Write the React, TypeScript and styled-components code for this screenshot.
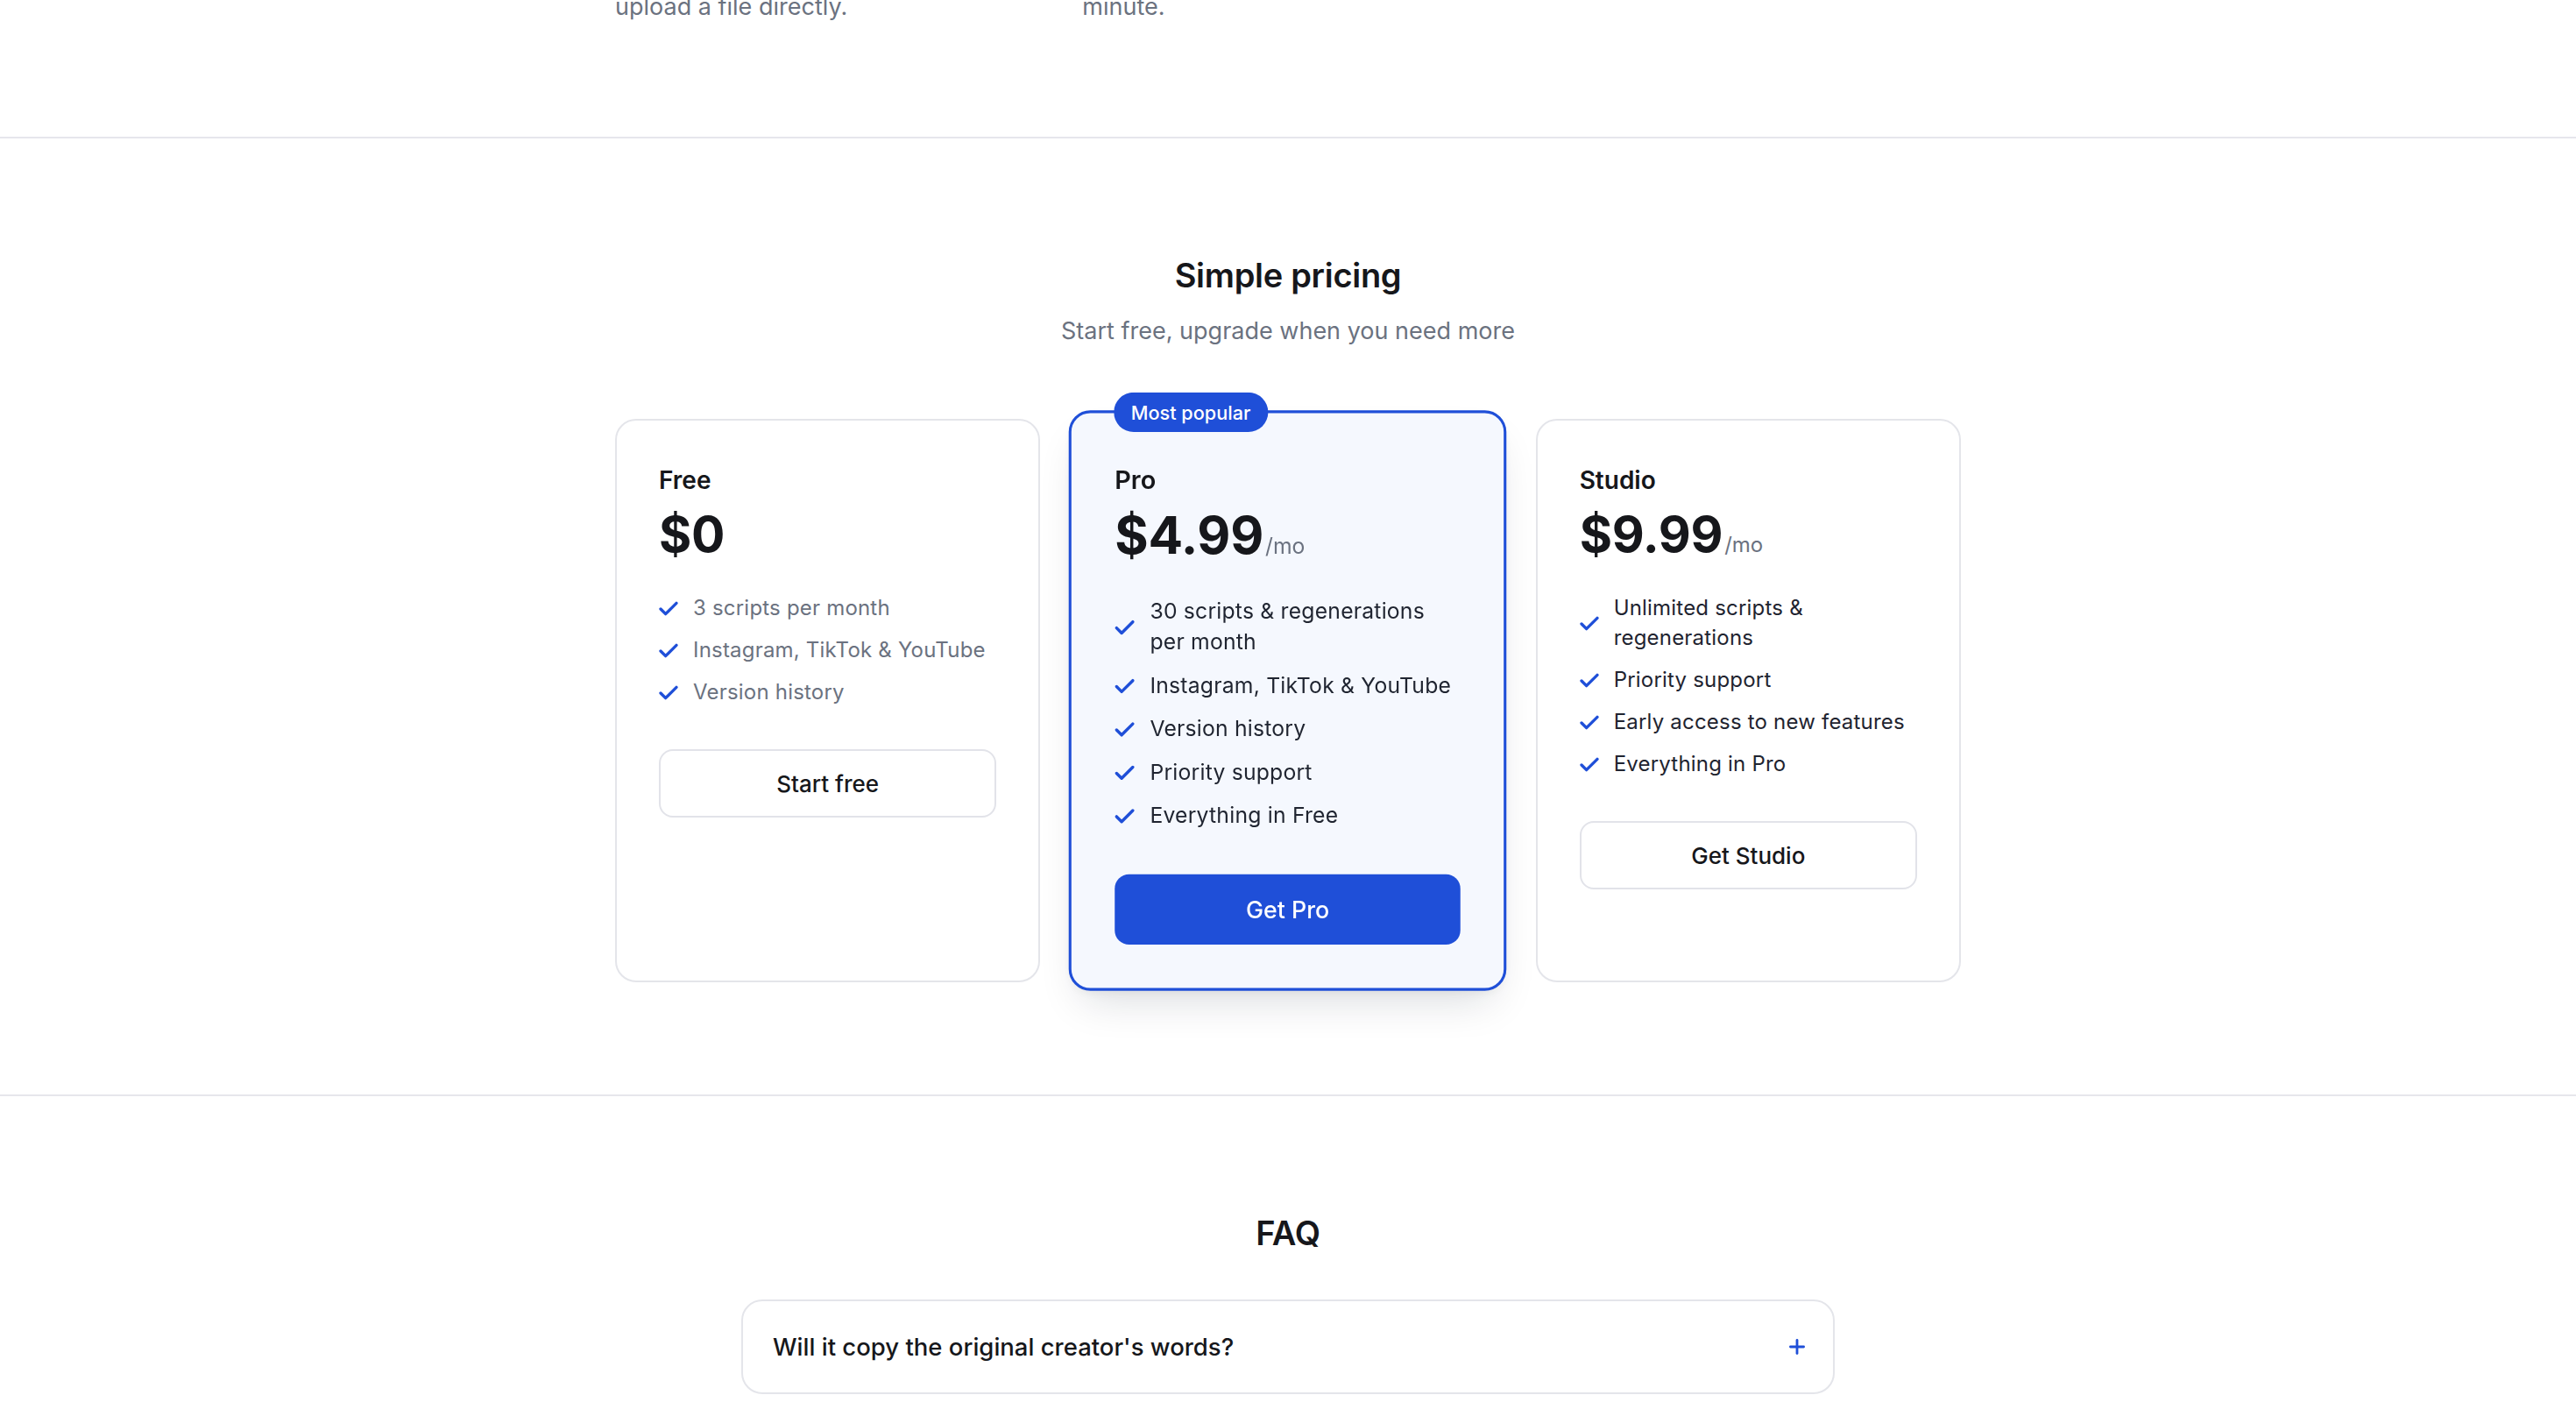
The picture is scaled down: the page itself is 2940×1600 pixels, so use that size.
import React from 'react';
import styled, { createGlobalStyle } from 'styled-components';
import { Plus } from 'lucide-react';

const GlobalStyle = createGlobalStyle`
  html, body {
    margin: 0;
    padding: 0;
    background: #ffffff;
    font-family: Inter, "Noto Sans", "Liberation Sans", sans-serif;
    color: #111827;
    overflow: hidden;
  }
  * { box-sizing: border-box; }
`;

const Page = styled.div`
  display: flex;
  flex-direction: column;
  width: 100%;
`;

const Section = styled.section<{ $first?: boolean }>`
  padding: ${(p) => (p.$first ? '0 0 128px' : '128px 0')};
  margin-top: ${(p) => (p.$first ? '-12px' : '0')};
  border-top: ${(p) => (p.$first ? 'none' : '2px solid #e6e6ec')};
`;

const Container = styled.div<{ $narrow?: boolean }>`
  width: 100%;
  max-width: ${(p) => (p.$narrow ? '1248px' : '1536px')};
  margin: 0 auto;
`;

const StepsGrid = styled.div`
  display: grid;
  grid-template-columns: repeat(3, 1fr);
  gap: 64px;
`;

const StepText = styled.p`
  margin: 0;
  font-size: 27px;
  line-height: 40px;
  color: #6b7280;
`;

const Heading = styled.h2`
  margin: 0;
  text-align: center;
  font-size: 38px;
  line-height: 56px;
  font-weight: 600;
  letter-spacing: -0.3px;
  color: #16171b;
`;

const Subheading = styled.p`
  margin: 16px 0 0;
  text-align: center;
  font-size: 27px;
  line-height: 40px;
  color: #6b7280;
`;

const PlanGrid = styled.div`
  display: grid;
  grid-template-columns: repeat(3, 1fr);
  gap: 40px;
  margin-top: 80px;
`;

const Card = styled.div<{ $featured?: boolean }>`
  position: relative;
  padding: ${(p) => (p.$featured ? '54px 48px 48px' : '48px')};
  border-radius: 24px;
  border: ${(p) => (p.$featured ? '3px solid #1f4fd8' : '2px solid #e4e5ea')};
  background: ${(p) => (p.$featured ? '#f5f8fe' : '#ffffff')};
  transform: ${(p) => (p.$featured ? 'scale(1.03)' : 'none')};
  box-shadow: ${(p) =>
    p.$featured ? '0 24px 48px -16px rgba(15, 23, 42, 0.16), 0 6px 14px -6px rgba(15, 23, 42, 0.08)' : 'none'};
`;

const Badge = styled.span`
  position: absolute;
  top: -23px;
  left: 47px;
  height: 44px;
  display: inline-flex;
  align-items: center;
  padding: 0 19px;
  border-radius: 999px;
  background: #1f4fd8;
  color: #ffffff;
  font-size: 21px;
  font-weight: 500;
  white-space: nowrap;
`;

const PlanName = styled.div`
  font-size: 28px;
  line-height: 40px;
  font-weight: 600;
  color: #16171b;
`;

const PriceRow = styled.div`
  display: flex;
  align-items: baseline;
  gap: 2px;
  margin-top: 10px;
`;

const Amount = styled.span`
  font-size: 57px;
  line-height: 64px;
  font-weight: 700;
  letter-spacing: -0.3px;
  color: #16171b;
`;

const Per = styled.span`
  font-size: 24px;
  color: #6b7280;
`;

const FeatureList = styled.ul<{ $muted?: boolean }>`
  list-style: none;
  margin: 35px 0 0;
  padding: 0;
  display: flex;
  flex-direction: column;
  gap: 14px;
  font-size: 24px;
  line-height: 34px;
  letter-spacing: 0.2px;
  color: ${(p) => (p.$muted ? '#6b7280' : '#1f2430')};
`;

const Feature = styled.li`
  display: flex;
  align-items: center;
  gap: 17px;
`;

const CheckIcon = styled.svg`
  flex-shrink: 0;
  width: 22px;
  height: 17px;
  color: #1f4fd8;
`;

const PlanButton = styled.button<{ $primary?: boolean }>`
  display: block;
  width: 100%;
  height: 78px;
  margin-top: 48px;
  border-radius: 16px;
  border: ${(p) => (p.$primary ? 'none' : '2px solid #e2e3e9')};
  background: ${(p) => (p.$primary ? '#1f4fd8' : '#ffffff')};
  color: ${(p) => (p.$primary ? '#ffffff' : '#16171b')};
  font-family: inherit;
  font-size: 26px;
  font-weight: 500;
  cursor: pointer;
`;

const FaqItem = styled.div`
  display: flex;
  align-items: center;
  justify-content: space-between;
  margin-top: 48px;
  padding: 32px 28px 32px 34px;
  border: 2px solid #e4e5ea;
  border-radius: 24px;
  background: #ffffff;
`;

const FaqQuestion = styled.span`
  font-size: 27.5px;
  line-height: 40px;
  font-weight: 500;
  color: #16171b;
`;

const FaqToggle = styled.span`
  display: flex;
  color: #1f4fd8;
`;

type Plan = {
  name: string;
  price: string;
  per?: boolean;
  features: string[];
  cta: string;
  featured?: boolean;
  muted?: boolean;
};

const plans: Plan[] = [
  {
    name: 'Free',
    price: '$0',
    features: ['3 scripts per month', 'Instagram, TikTok & YouTube', 'Version history'],
    cta: 'Start free',
    muted: true,
  },
  {
    name: 'Pro',
    price: '$4.99',
    per: true,
    features: [
      '30 scripts & regenerations per month',
      'Instagram, TikTok & YouTube',
      'Version history',
      'Priority support',
      'Everything in Free',
    ],
    cta: 'Get Pro',
    featured: true,
  },
  {
    name: 'Studio',
    price: '$9.99',
    per: true,
    features: ['Unlimited scripts & regenerations', 'Priority support', 'Early access to new features', 'Everything in Pro'],
    cta: 'Get Studio',
  },
];

function Check() {
  return (
    <CheckIcon viewBox="2.2 4.2 19.6 14.6" fill="none" stroke="currentColor" strokeWidth={3} strokeLinecap="round" strokeLinejoin="round">
      <path d="M20 6 9 17l-5-5" />
    </CheckIcon>
  );
}

export default function App() {
  return (
    <Page>
      <GlobalStyle />

      <Section $first>
        <Container>
          <StepsGrid>
            <StepText>upload a file directly.</StepText>
            <StepText>minute.</StepText>
            <StepText />
          </StepsGrid>
        </Container>
      </Section>

      <Section>
        <Container>
          <Heading>Simple pricing</Heading>
          <Subheading>Start free, upgrade when you need more</Subheading>
          <PlanGrid>
            {plans.map((plan) => (
              <Card key={plan.name} $featured={plan.featured}>
                {plan.featured && <Badge>Most popular</Badge>}
                <PlanName>{plan.name}</PlanName>
                <PriceRow>
                  <Amount>{plan.price}</Amount>
                  {plan.per && <Per>/mo</Per>}
                </PriceRow>
                <FeatureList $muted={plan.muted}>
                  {plan.features.map((f) => (
                    <Feature key={f}>
                      <Check />
                      <span>{f}</span>
                    </Feature>
                  ))}
                </FeatureList>
                <PlanButton $primary={plan.featured}>{plan.cta}</PlanButton>
              </Card>
            ))}
          </PlanGrid>
        </Container>
      </Section>

      <Section>
        <Container $narrow>
          <Heading>FAQ</Heading>
          <FaqItem>
            <FaqQuestion>Will it copy the original creator's words?</FaqQuestion>
            <FaqToggle>
              <Plus size={26} strokeWidth={2.6} />
            </FaqToggle>
          </FaqItem>
        </Container>
      </Section>
    </Page>
  );
}
